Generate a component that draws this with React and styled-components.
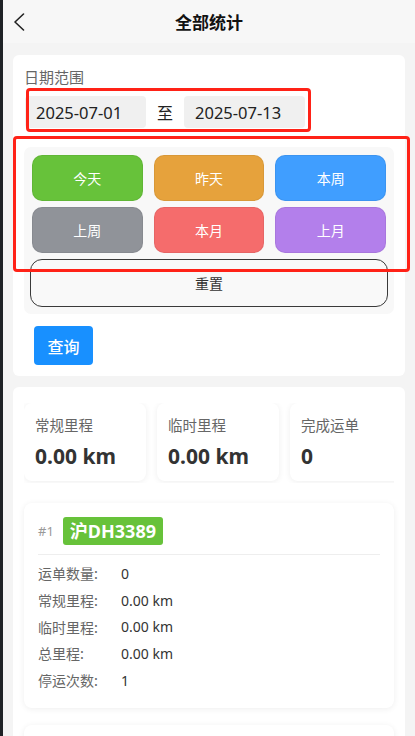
import React from "react";
import styled, { createGlobalStyle } from "styled-components";

const Global = createGlobalStyle`
  * { box-sizing: border-box; }
  html, body { margin: 0; padding: 0; background: #f4f4f4; }
  body {
    font-family: "Noto Sans", "Noto Sans CJK SC", sans-serif;
    color: #333;
  }
`;

const Page = styled.div`
  min-height: 100vh;
  border-left: 3px solid #1f2226;
  background: #f4f4f4;
  display: flex;
  flex-direction: column;
`;

const Header = styled.header`
  height: 43px;
  background: #f7f7f7;
  display: grid;
  grid-template-columns: 40px 1fr 40px;
  align-items: center;
`;

const Back = styled.button`
  border: 0;
  background: none;
  padding: 0 0 0 10px;
  height: 43px;
  display: flex;
  align-items: center;
  cursor: pointer;
`;

const Title = styled.h1`
  margin: 0;
  text-align: center;
  font-size: 17px;
  font-weight: 700;
  color: #111;
  font-family: "Noto Sans CJK SC", sans-serif;
`;

const Content = styled.main`
  padding: 12px 10px 0;
  display: flex;
  flex-direction: column;
  gap: 11px;
`;

const Card = styled.section`
  position: relative;
  background: #fff;
  border-radius: 6px;
  padding: ${(p) => p.$pad};
`;

const Label = styled.div`
  font-size: 15px;
  line-height: 22px;
  color: #666;
  font-family: "Noto Sans CJK SC", sans-serif;
`;

const DateRow = styled.div`
  margin-top: 8px;
  margin-left: 1px;
  display: flex;
  align-items: center;
`;

const DateInput = styled.div`
  width: 121px;
  height: 32px;
  border-radius: 4px;
  background: #f0f0f0;
  padding-left: 11px;
  display: flex;
  align-items: center;
  font-size: 16.5px;
  color: #222;
`;

const To = styled.span`
  margin: 0 11px;
  font-size: 16px;
  color: #222;
  font-family: "Noto Sans CJK SC", sans-serif;
`;

const QuickPanel = styled.div`
  margin-top: 19px;
  background: #f8f8f8;
  border-radius: 7px;
  padding: 8px 8px 7px;
`;

const QuickGrid = styled.div`
  display: grid;
  grid-template-columns: repeat(3, 1fr);
  column-gap: 11px;
  row-gap: 6px;
`;

const QuickButton = styled.button`
  height: 46px;
  border-radius: 10px;
  border: 1px solid rgba(0, 0, 0, 0.06);
  background: ${(p) => p.$bg};
  color: #fff;
  font-size: 14px;
  font-family: "Noto Sans CJK SC", sans-serif;
  cursor: pointer;
`;

const ResetButton = styled.button`
  display: block;
  width: calc(100% + 4px);
  margin: 6px -2px 0;
  height: 48px;
  border-radius: 12px;
  border: 1px solid #3a3a3a;
  background: #f9f9f9;
  color: #333;
  font-size: 14px;
  font-family: "Noto Sans CJK SC", sans-serif;
  cursor: pointer;
`;

const QueryButton = styled.button`
  margin: 12px 0 0 10px;
  width: 59px;
  height: 39px;
  border: 0;
  border-radius: 4px;
  background: #1890ff;
  color: #fff;
  font-size: 16px;
  font-weight: 500;
  font-family: "Noto Sans CJK SC", sans-serif;
  cursor: pointer;
`;

const Annotation = styled.div`
  position: absolute;
  left: ${(p) => p.$left}px;
  top: ${(p) => p.$top}px;
  width: ${(p) => p.$w}px;
  height: ${(p) => p.$h}px;
  border: 3px solid #ff2217;
  border-radius: 4px;
  pointer-events: none;
`;

const StatRow = styled.div`
  display: flex;
  gap: 11px;
  overflow: hidden;
  padding-bottom: 2px;
`;

const StatBox = styled.div`
  flex: 0 0 122px;
  height: 78px;
  background: #fff;
  border-radius: 8px;
  box-shadow: 0 1px 6px rgba(0, 0, 0, 0.07);
  padding: 12px 11px 0;
`;

const StatLabel = styled.div`
  font-size: 14.5px;
  line-height: 20px;
  color: #666;
  font-family: "Noto Sans CJK SC", sans-serif;
`;

const StatValue = styled.div`
  margin-top: 7px;
  font-size: 21px;
  line-height: 28px;
  font-weight: 700;
  color: #333;
`;

const VehicleCard = styled.div`
  margin-top: ${(p) => p.$mt}px;
  background: #fff;
  border-radius: 8px;
  box-shadow: 0 1px 6px rgba(0, 0, 0, 0.07);
  padding: 14px 14px 15px;
`;

const VehicleHead = styled.div`
  display: flex;
  align-items: center;
  gap: 9px;
  padding-bottom: 9px;
  border-bottom: 1px solid #eee;
`;

const Index = styled.span`
  font-size: 13px;
  color: #999;
`;

const Plate = styled.span`
  height: 28px;
  padding: 0 7px;
  border-radius: 3px;
  background: #67c23a;
  color: #fff;
  font-size: 18px;
  font-weight: 700;
  line-height: 28px;
  font-family: "Noto Sans", "Noto Sans CJK SC", sans-serif;
`;

const InfoList = styled.dl`
  margin: 5px 0 0;
`;

const InfoRow = styled.div`
  display: flex;
  height: 26.7px;
  align-items: center;
  font-size: 14px;
`;

const InfoLabel = styled.dt`
  width: 83px;
  color: #666;
  font-family: "Noto Sans CJK SC", sans-serif;
`;

const InfoValue = styled.dd`
  margin: 0;
  color: #333;
`;

const quick = [
  { t: "今天", c: "#67c23a" },
  { t: "昨天", c: "#e6a23c" },
  { t: "本周", c: "#409eff" },
  { t: "上周", c: "#909399" },
  { t: "本月", c: "#f56c6c" },
  { t: "上月", c: "#b37feb" },
];

const stats = [
  { l: "常规里程", v: "0.00 km" },
  { l: "临时里程", v: "0.00 km" },
  { l: "完成运单", v: "0" },
];

const vehicles = [
  {
    no: 1,
    plate: "沪DH3389",
    rows: [
      ["运单数量:", "0"],
      ["常规里程:", "0.00 km"],
      ["临时里程:", "0.00 km"],
      ["总里程:", "0.00 km"],
      ["停运次数:", "1"],
    ],
  },
  {
    no: 2,
    plate: "沪DH3390",
    rows: [
      ["运单数量:", "0"],
      ["常规里程:", "0.00 km"],
      ["临时里程:", "0.00 km"],
      ["总里程:", "0.00 km"],
      ["停运次数:", "0"],
    ],
  },
];

export default function App() {
  return (
    <>
      <Global />
      <Page>
        <Header>
          <Back aria-label="返回">
            <svg width="12" height="18" viewBox="0 0 12 18" fill="none">
              <path d="M10.5 1 L2 9 L10.5 17" stroke="#222" strokeWidth="1.6" strokeLinecap="round" strokeLinejoin="round" />
            </svg>
          </Back>
          <Title>全部统计</Title>
          <span />
        </Header>
        <Content>
          <Card $pad="11px 11px 11px">
            <Label>日期范围</Label>
            <DateRow>
              <DateInput>2025-07-01</DateInput>
              <To>至</To>
              <DateInput>2025-07-13</DateInput>
            </DateRow>
            <QuickPanel>
              <QuickGrid>
                {quick.map((q) => (
                  <QuickButton key={q.t} $bg={q.c}>{q.t}</QuickButton>
                ))}
              </QuickGrid>
              <ResetButton>重置</ResetButton>
            </QuickPanel>
            <QueryButton>查询</QueryButton>
            <Annotation $left={13} $top={33} $w={285} $h={44} />
            <Annotation $left={0} $top={81} $w={397} $h={136} />
          </Card>
          <Card $pad="16px 11px 16px">
            <StatRow>
              {stats.map((s) => (
                <StatBox key={s.l}>
                  <StatLabel>{s.l}</StatLabel>
                  <StatValue>{s.v}</StatValue>
                </StatBox>
              ))}
            </StatRow>
            {vehicles.map((v, i) => (
              <VehicleCard key={v.no} $mt={i === 0 ? 20 : 17}>
                <VehicleHead>
                  <Index>#{v.no}</Index>
                  <Plate>{v.plate}</Plate>
                </VehicleHead>
                <InfoList>
                  {v.rows.map(([l, val]) => (
                    <InfoRow key={l}>
                      <InfoLabel>{l}</InfoLabel>
                      <InfoValue>{val}</InfoValue>
                    </InfoRow>
                  ))}
                </InfoList>
              </VehicleCard>
            ))}
          </Card>
        </Content>
      </Page>
    </>
  );
}
